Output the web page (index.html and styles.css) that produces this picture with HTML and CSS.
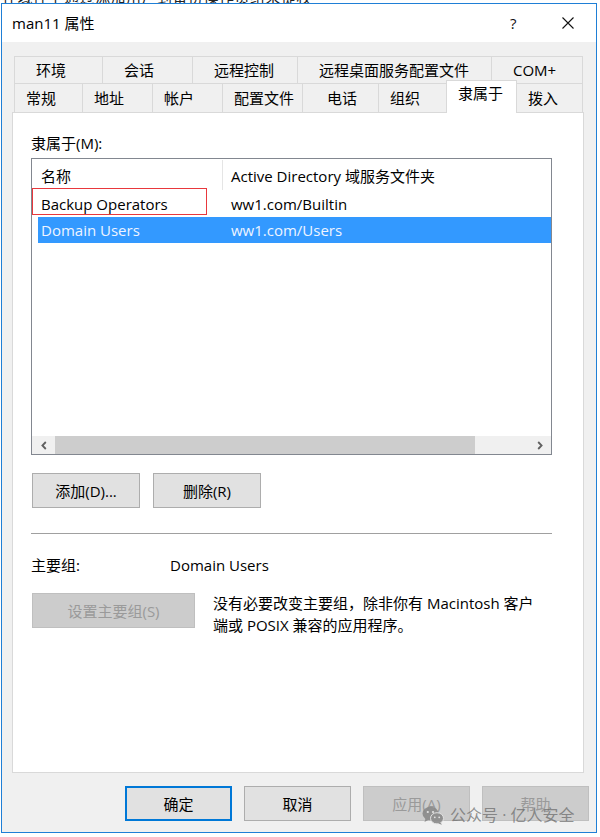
FILE: index.html
```html
<!DOCTYPE html>
<html>
<head>
<meta charset="utf-8">
<link rel="stylesheet" href="styles.css">
</head>
<body>
<div class="topcut"><span>在域控上通过添加用户到备份操作员组来提权</span></div>
<div class="window">
  <div class="titlebar">
    <span class="title">man11 属性</span>
    <span class="help">?</span>
    <svg class="close" width="12" height="12" viewBox="0 0 12 12"><path d="M0.5 0.5 L11.5 11.5 M11.5 0.5 L0.5 11.5" stroke="#111" stroke-width="1.1" fill="none"/></svg>
  </div>
  <div class="body">
    <div class="tabs">
      <div class="tabrow">
        <div class="tab w88">环境</div>
        <div class="tab w90">会话</div>
        <div class="tab w105">远程控制</div>
        <div class="tab w194">远程桌面服务配置文件</div>
        <div class="tab w92">COM+</div>
      </div>
      <div class="tabrow row2">
        <div class="tab w68">常规</div>
        <div class="tab w70">地址</div>
        <div class="tab w70">帐户</div>
        <div class="tab w80">配置文件</div>
        <div class="tab w76 pl25">电话</div>
        <div class="tab w68">组织</div>
        <div class="tab w71 sel">隶属于</div>
        <div class="tab w66">拨入</div>
      </div>
    </div>
    <div class="panel">
      <div class="label">隶属于(M):</div>
      <div class="list">
        <div class="lhead"><div class="hc1">名称</div><div class="hc2">Active Directory 域服务文件夹</div></div>
        <div class="lrow"><div>Backup Operators</div><div>ww1.com/Builtin</div></div>
        <div class="lrow selected"><div>Domain Users</div><div>ww1.com/Users</div></div>
        <div class="lspace"></div>
        <div class="hscroll">
          <div class="sbtn"><svg width="6" height="9" viewBox="0 0 6 9"><polyline points="4.8,1 1.4,4.5 4.8,8" fill="none" stroke="#606060" stroke-width="1.8"/></svg></div>
          <div class="thumb"></div>
          <div class="track"></div>
          <div class="sbtn"><svg width="6" height="9" viewBox="0 0 6 9"><polyline points="1.2,1 4.6,4.5 1.2,8" fill="none" stroke="#606060" stroke-width="1.8"/></svg></div>
        </div>
        <div class="redbox"></div>
      </div>
      <div class="btnrow">
        <button class="btn w108">添加(D)...</button>
        <button class="btn w108">删除(R)</button>
      </div>
      <div class="sep"></div>
      <div class="primary"><span class="plabel">主要组:</span><span>Domain Users</span></div>
      <div class="setrow">
        <button class="btn disabled wide">设置主要组(S)</button>
        <div class="desc">没有必要改变主要组，除非你有 Macintosh 客户<br>端或 POSIX 兼容的应用程序。</div>
      </div>
    </div>
    <div class="footer">
      <button class="btn w107 default">确定</button>
      <button class="btn w107">取消</button>
      <button class="btn w107 disabled">应用(A)</button>
      <button class="btn w107 disabled">帮助</button>
    </div>
  </div>
  <div class="watermark">
    <svg width="22" height="19" viewBox="0 0 22 19"><ellipse cx="8.5" cy="7.5" rx="8" ry="6.8" fill="#8a8a8a"/><path d="M3.5 12.5 L2.5 16 L7 13.5 Z" fill="#8a8a8a"/><ellipse cx="15" cy="12.3" rx="6.5" ry="5.6" fill="#8a8a8a" stroke="#e6e6e6" stroke-width="1"/><path d="M18.5 16.5 L20 18.8 L16 17.5 Z" fill="#8a8a8a"/><circle cx="5.8" cy="6" r="1.1" fill="#e6e6e6"/><circle cx="11" cy="6" r="1.1" fill="#e6e6e6"/><circle cx="12.8" cy="11.3" r="0.9" fill="#e6e6e6"/><circle cx="17.2" cy="11.3" r="0.9" fill="#e6e6e6"/></svg>
    <span>公众号 · 亿人安全</span>
  </div>
</div>
</body>
</html>
```
FILE: styles.css
```css
body {
  margin: 0;
  background: #fff;
  font-family: "Open Sans", "Noto Sans CJK SC", sans-serif;
  font-size: 15px;
  color: #000;
}
.topcut {
  height: 3px;
  overflow: hidden;
  display: flex;
  align-items: flex-end;
  padding-left: 2px;
}
.topcut span {
  flex: none;
  font-size: 15px;
  line-height: 12px;
  color: #222;
  white-space: nowrap;
  letter-spacing: 0.5px;
}
.window {
  margin-left: 1px;
  width: 596px;
  height: 830px;
  box-sizing: border-box;
  border: 1px solid #1f7fd6;
  background: #f0f0f0;
  position: relative;
  display: flex;
  flex-direction: column;
}
.titlebar {
  flex: none;
  height: 38px;
  background: #fff;
  display: flex;
  align-items: center;
  padding-left: 10px;
}
.title {
  flex: 1;
  font-size: 15px;
  line-height: 20px;
}
.help {
  font-size: 15px;
  line-height: 20px;
  width: 8px;
  color: #111;
}
.close {
  margin-left: 44px;
  margin-right: 22px;
}
.body {
  flex: 1;
  padding-top: 14px;
  display: flex;
  flex-direction: column;
}
.tabs {
  margin-left: 12px;
  width: 569px;
}
.tabrow {
  display: flex;
  height: 27px;
}
.tabrow.row2 {
  height: 29px;
}
.tab {
  flex: none;
  box-sizing: border-box;
  border-left: 1px solid #d9d9d9;
  border-top: 1px solid #d9d9d9;
  display: flex;
  align-items: center;
  justify-content: flex-start;
  padding-left: 21px;
  line-height: 20px;
  white-space: nowrap;
}
.tabrow.row2 .tab {
  padding-left: 11px;
}
.tabrow.row2 .tab.pl25 {
  padding-left: 24px;
}
.tab:last-child {
  border-right: 1px solid #d9d9d9;
}
.tab.sel {
  background: #fff;
  margin-top: -3px;
  height: 33px;
  align-items: flex-start;
  padding-top: 2px;
  border-right: 1px solid #d9d9d9;
  position: relative;
  z-index: 1;
}
.tab.sel + .tab {
  border-left: none;
}
.w66 { width: 66px; }
.w68 { width: 68px; }
.w70 { width: 70px; }
.w71 { width: 71px; }
.w76 { width: 76px; }
.w80 { width: 80px; }
.w88 { width: 88px; }
.w90 { width: 90px; }
.w92 { width: 92px; }
.w105 { width: 105px; }
.w194 { width: 194px; }
.w107 { width: 107px; }
.w108 { width: 108px; }
.panel {
  flex: none;
  margin-left: 10px;
  width: 572px;
  height: 661px;
  box-sizing: border-box;
  border: 1px solid #d9d9d9;
  background: #fff;
  padding: 20px 0 0 18px;
}
.label {
  line-height: 20px;
  height: 20px;
}
.list {
  margin-top: 5px;
  width: 521px;
  height: 297px;
  box-sizing: border-box;
  border: 1px solid #828790;
  display: flex;
  flex-direction: column;
  position: relative;
  background: #fff;
}
.lhead {
  flex: none;
  display: grid;
  grid-template-columns: 191px 1fr;
  height: 32px;
}
.hc1 {
  border-right: 1px solid #e5e5e5;
  margin: 1px 0;
  padding-left: 9px;
  display: flex;
  align-items: center;
}
.hc2 {
  padding-left: 8px;
  display: flex;
  align-items: center;
  white-space: nowrap;
}
.lrow {
  flex: none;
  display: grid;
  grid-template-columns: 190px 1fr;
  align-items: center;
  height: 26px;
  margin-left: 6px;
  padding-left: 3px;
}
.lrow.selected {
  background: #3399ff;
  color: #eef4ff;
}
.lspace {
  flex: 1;
}
.hscroll {
  flex: none;
  height: 18px;
  display: flex;
  background: #f0f0f0;
}
.sbtn {
  width: 23px;
  display: flex;
  align-items: center;
  justify-content: center;
}
.thumb {
  width: 420px;
  background: #cdcdcd;
}
.track {
  flex: 1;
}
.redbox {
  position: absolute;
  left: 0;
  top: 29px;
  width: 175px;
  height: 27px;
  box-sizing: border-box;
  border: 1px solid #e8383d;
}
.btn {
  box-sizing: border-box;
  height: 35px;
  border: 1px solid #adadad;
  background: #e1e1e1;
  font-family: inherit;
  font-size: 15px;
  color: #000;
  padding: 0;
  display: flex;
  align-items: center;
  justify-content: center;
  line-height: 20px;
}
.btn.disabled {
  background: #cccccc;
  border-color: #bfbfbf;
  color: #9a9a9a;
}
.btn.default {
  border: 2px solid #0078d7;
}
.btnrow {
  display: flex;
  gap: 13px;
  margin-top: 18px;
  padding-left: 1px;
}
.sep {
  margin-top: 25px;
  width: 521px;
  height: 1px;
  background: #a0a0a0;
}
.primary {
  margin-top: 21px;
  display: flex;
  line-height: 20px;
}
.plabel {
  width: 139px;
}
.setrow {
  display: flex;
  align-items: flex-start;
  margin-top: 17px;
}
.wide {
  width: 163px;
  margin-left: 1px;
  margin-top: 1px;
}
.desc {
  margin-left: 18px;
  line-height: 22px;
}
.footer {
  display: flex;
  justify-content: flex-end;
  gap: 12px;
  margin-top: 13px;
  padding-right: 7px;
}
.watermark {
  position: absolute;
  left: 420px;
  top: 801px;
  display: flex;
  align-items: center;
  gap: 6px;
  font-size: 16px;
  line-height: 20px;
  color: rgba(105, 105, 105, 0.8);
  opacity: 0.9;
}
```
